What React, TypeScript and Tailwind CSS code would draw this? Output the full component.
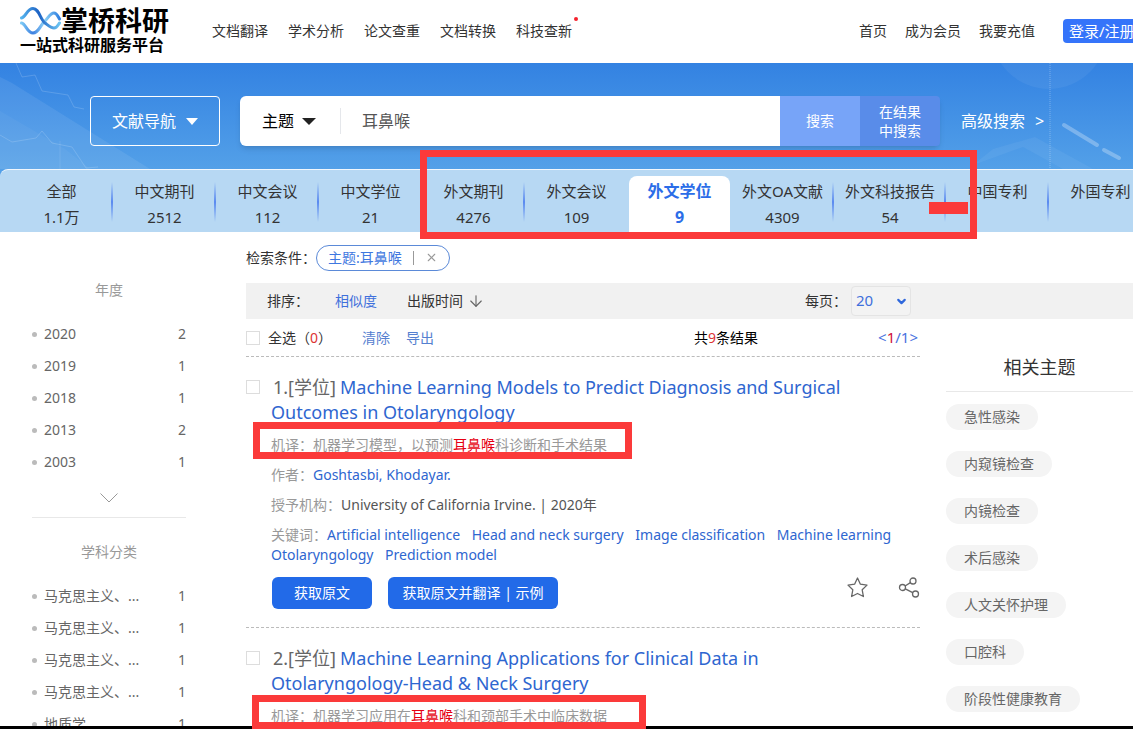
import { Fragment } from "react";
import { ArrowDown, ChevronDown, X } from "lucide-react";

const navLinks = ["文档翻译", "学术分析", "论文查重", "文档转换", "科技查新"];
const userLinks = ["首页", "成为会员", "我要充值"];

type SourceTab = { label: string; count: string; active?: boolean; divider?: boolean };

const tabs: SourceTab[] = [
  { label: "全部", count: "1.1万", divider: true },
  { label: "中文期刊", count: "2512", divider: true },
  { label: "中文会议", count: "112", divider: true },
  { label: "中文学位", count: "21", divider: true },
  { label: "外文期刊", count: "4276", divider: true },
  { label: "外文会议", count: "109" },
  { label: "外文学位", count: "9", active: true },
  { label: "外文OA文献", count: "4309", divider: true },
  { label: "外文科技报告", count: "54", divider: true },
  { label: "中国专利", count: "", divider: true },
  { label: "外国专利", count: "" },
];

const years = [
  { name: "2020", count: 2 },
  { name: "2019", count: 1 },
  { name: "2018", count: 1 },
  { name: "2013", count: 2 },
  { name: "2003", count: 1 },
];

const subjects = [
  { name: "马克思主义、...", count: 1 },
  { name: "马克思主义、...", count: 1 },
  { name: "马克思主义、...", count: 1 },
  { name: "马克思主义、...", count: 1 },
  { name: "地质学", count: 1 },
];

const topics = ["急性感染", "内窥镜检查", "内镜检查", "术后感染", "人文关怀护理", "口腔科", "阶段性健康教育"];

const keywords = [
  "Artificial intelligence",
  "Head and neck surgery",
  "Image classification",
  "Machine learning",
  "Otolaryngology",
  "Prediction model",
];

function Logo() {
  return (
    <a href="#" className="block w-[148px] shrink-0 pb-1 text-black">
      <span className="flex h-8 items-center">
        <svg viewBox="0 0 41 30" className="h-[30px] w-[41px] shrink-0" fill="none" strokeLinecap="round">
          <defs>
            <linearGradient id="waveTop" x1="0" y1="0" x2="1" y2="0">
              <stop offset="0%" stopColor="#56b4ee" />
              <stop offset="45%" stopColor="#1d62c4" />
              <stop offset="100%" stopColor="#6cc4f2" />
            </linearGradient>
            <linearGradient id="waveBottom" x1="0" y1="0" x2="1" y2="0">
              <stop offset="0%" stopColor="#7cc9f5" />
              <stop offset="30%" stopColor="#3d7fe0" />
              <stop offset="60%" stopColor="#8fd3f7" />
              <stop offset="100%" stopColor="#2f7fe0" />
            </linearGradient>
          </defs>
          <path d="M1.500 17C6 18 7 27 13 27C19 27 20 19 25 15C29 11 30 7 34 7C37 7 38 11 39.500 13" stroke="url(#waveBottom)" strokeWidth="3" />
          <path d="M1.500 12C6 11 7 2.500 13 2.500C19 2.500 20 13 25 17C29 20 31 22 34 22C37 22 38 19 39.500 17" stroke="url(#waveTop)" strokeWidth="3" />
        </svg>
        <span className="whitespace-nowrap text-[27px] font-bold leading-8">掌桥科研</span>
      </span>
      <span className="block whitespace-nowrap text-base font-bold leading-4">一站式科研服务平台</span>
    </a>
  );
}

function Header() {
  return (
    <header className="flex h-[63px] items-center bg-white pb-0.5 pl-5 text-sm text-[#333]">
      <Logo />
      <nav className="ml-11 flex gap-5">
        {navLinks.map((label) => (
          <a key={label} href="#" className="relative whitespace-nowrap">
            {label}
            {label === "科技查新" && <span className="absolute -right-1.5 -top-1 size-1 rounded-full bg-[#f5222d]" />}
          </a>
        ))}
      </nav>
      <div className="ml-auto flex items-center gap-[18px]">
        {userLinks.map((label) => (
          <a key={label} href="#" className="whitespace-nowrap">
            {label}
          </a>
        ))}
        <button className="ml-2.5 h-6 w-[70px] whitespace-nowrap rounded-l bg-[#3574fa] pl-1.5 text-left text-[15px] leading-6 text-white">登录/注册</button>
      </div>
    </header>
  );
}

function BannerArt() {
  return (
    <>
      <svg viewBox="0 0 180 106" className="absolute left-0 top-0 h-full w-[180px]" fill="none">
        <path d="M0 14L12 20L150 106H0Z" fill="#fff" fillOpacity="0.08" />
        <path d="M0 48L65 86L90 106H0Z" fill="#fff" fillOpacity="0.04" />
        <path d="M16 0L22 14L35 12L42 28L68 32L74 44L84 46M0 72L12 79L36 75L42 68L52 80L72 84L86 105L98 104" stroke="#fff" strokeOpacity="0.16" />
        <path d="M60 78V106" stroke="#fff" strokeOpacity="0.1" />
      </svg>
      <svg viewBox="0 0 160 106" className="absolute right-0 top-0 h-full w-40" fill="none">
        <circle cx="76" cy="-32" r="58" fill="#fff" fillOpacity="0.05" />
        <path d="M77 0V106" stroke="#fff" strokeOpacity="0.3" strokeDasharray="1 1" />
        <path d="M20 86L62 74L120 106H90L50 84L0 102Z" fill="#fff" fillOpacity="0.05" />
        <path d="M91 62L124 82M131 87L146 95" stroke="#fff" strokeOpacity="0.28" strokeWidth="4" strokeLinecap="round" />
      </svg>
    </>
  );
}

function SearchBanner() {
  return (
    <section className="relative flex h-[106px] bg-linear-to-b from-[#3382e2] to-[#53a0e8] pl-[90px] pt-[33px]">
      <BannerArt />
      <button className="relative flex h-[50px] w-[130px] shrink-0 items-center justify-center gap-2.5 rounded border border-white text-base text-white">
        文献导航
        <span className="border-x-[6px] border-t-[7px] border-x-transparent border-t-white" />
      </button>
      <form className="relative ml-5 flex h-[50px] max-w-[700px] flex-1 rounded-md shadow-md">
        <button type="button" className="flex w-[100px] shrink-0 items-center gap-2 rounded-l-md bg-white pl-[22px] text-base text-black">
          主题
          <span className="border-x-[7px] border-t-[7px] border-x-transparent border-t-[#222]" />
        </button>
        <div className="flex min-w-0 flex-1 items-center bg-white">
          <span className="h-[26px] w-px bg-gray-200" />
          <input aria-label="检索词" defaultValue="耳鼻喉" className="min-w-0 flex-1 px-[21px] text-base text-[#555] outline-none" />
        </div>
        <button type="button" className="w-20 shrink-0 bg-[#77a4f8] text-sm text-white">搜索</button>
        <button type="button" className="w-20 shrink-0 rounded-r bg-[#598ce9] text-sm leading-[19px] text-white">
          在结果
          <br />
          中搜索
        </button>
      </form>
      <a href="#" className="relative ml-[21px] flex h-[50px] items-center gap-2.5 whitespace-nowrap pr-20 text-base text-white">
        高级搜索
        <span>&gt;</span>
      </a>
    </section>
  );
}

function SourceTabs() {
  return (
    <div className="relative bg-[#53a0e8]">
      <nav className="flex h-[63px] overflow-hidden rounded-tl-lg border-t border-white/80 bg-[#b7d8f3] pl-2.5 text-[15px] text-[#333]">
        {tabs.map((tab) =>
          tab.active ? (
            <a key={tab.label} href="#" className="mx-px mt-1.5 flex w-[101px] shrink-0 flex-col rounded-t-lg bg-white text-center text-base font-bold leading-[26px] text-[#2b6de8]">
              <span className="mt-0.5">{tab.label}</span>
              <span>{tab.count}</span>
            </a>
          ) : (
            <a key={tab.label} href="#" className="relative min-w-[103px] shrink-0 whitespace-nowrap px-[11px] pt-2 text-center leading-[26px]">
              <span className="block">{tab.label}</span>
              <span className="block">{tab.count}</span>
              {tab.divider && <span className="absolute right-0 top-3 h-10 w-0.5 bg-linear-to-b from-transparent via-[#5a8af0] to-transparent" />}
            </a>
          )
        )}
      </nav>
      <div className="absolute -top-[19px] left-[420px] z-10 h-[89px] w-[557px] border-[7px] border-[#fb3a3a]" />
      <div className="absolute left-[929px] top-[33px] z-10 h-3 w-[39px] bg-[#fb3a3a]" />
    </div>
  );
}

function FacetList({ title, items }: { title: string; items: { name: string; count: number }[] }) {
  return (
    <>
      <h3 className="mb-3 h-8 text-center text-sm leading-8 text-[#999]">{title}</h3>
      <ul className="text-[#666]">
        {items.map((item, i) => (
          <li key={i} className="flex h-8 items-center">
            <span className="mr-[7px] size-[5px] rounded-full bg-[#bbb]" />
            <a href="#" className="flex-1 text-sm">{item.name}</a>
            <span className="text-sm">{item.count}</span>
          </li>
        ))}
      </ul>
    </>
  );
}

function Sidebar() {
  return (
    <aside className="w-[246px] shrink-0 pl-8 pr-[60px] pt-[42px]">
      <FacetList title="年度" items={years} />
      <div className="mb-[18px] flex h-10 items-center justify-center border-b border-[#e8e8e8]">
        <button aria-label="展开">
          <svg viewBox="0 0 18 10" className="h-2.5 w-[18px]" fill="none" stroke="#999">
            <path d="M0.500 0.500L9 9L17.500 0.500" />
          </svg>
        </button>
      </div>
      <FacetList title="学科分类" items={subjects} />
    </aside>
  );
}

function Checkbox({ id, label }: { id: string; label: string }) {
  return <input id={id} type="checkbox" aria-label={label} className="size-3.5 shrink-0 appearance-none border border-[#ddd] bg-white" />;
}

function ResultTitle({ index, children }: { index: number; children: string }) {
  return (
    <h2 className="pr-8 text-lg leading-[25px] text-[#666]">
      <span className="ml-0.5 mr-1">{`${index}.[学位]`}</span>
      <a href="#" className="text-[#2e66d0]">
        {children}
      </a>
    </h2>
  );
}

function Translation({ before, after }: { before: string; after: string }) {
  return (
    <p className="mt-[5px] text-sm leading-[30px] text-[#999]">
      {`机译：${before}`}
      <em className="not-italic text-[#e60012]">耳鼻喉</em>
      {after}
    </p>
  );
}

function ShareIcon() {
  return (
    <svg viewBox="0 0 22 22" className="size-[22px]" fill="none" stroke="#666" strokeWidth="1.300">
      <circle cx="4.500" cy="10.500" r="3" />
      <circle cx="15" cy="4" r="3" />
      <circle cx="17.500" cy="17" r="3" />
      <path d="M7.100 9L12.400 5.600M7.300 11.800L14.700 15.700" />
    </svg>
  );
}

function Results() {
  return (
    <div className="w-[674px] shrink-0">
      <div className="flex h-[38px] items-center border-b border-dashed border-[#bbb] text-sm text-[#333]">
        <Checkbox id="all" label="全选" />
        <label htmlFor="all" className="ml-2">
          全选（<span className="text-[#d33]">0</span>）
        </label>
        <a href="#" className="ml-[30px] text-[#5580d0]">清除</a>
        <a href="#" className="ml-4 text-[#5580d0]">导出</a>
        <span className="ml-auto text-black">
          共<span className="text-[#d33]">9</span>条结果
        </span>
        <span className="ml-[120px] mr-0.5 text-[15px] text-[#4a72e0]">
          &lt;<span className="text-[#d0103a]">1</span>/1&gt;
        </span>
      </div>

      <article className="flex border-b border-dashed border-[#bbb] py-[18px]">
        <div className="w-[25px] shrink-0 pt-[5px] leading-none">
          <Checkbox id="r1" label="选择第1条" />
        </div>
        <div className="relative min-w-0 flex-1">
          <ResultTitle index={1}>Machine Learning Models to Predict Diagnosis and Surgical Outcomes in Otolaryngology</ResultTitle>
          <Translation before="机器学习模型，以预测" after="科诊断和手术结果" />
          <p className="text-sm leading-[30px] text-[#999]">
            作者：<a href="#" className="text-[#2e66d0]">Goshtasbi, Khodayar.</a>
          </p>
          <p className="text-sm leading-[30px] text-[#999]">
            授予机构：<span className="text-[#555]">University of California Irvine. | 2020年</span>
          </p>
          <p className="py-[5px] text-sm leading-5 text-[#999]">
            关键词：
            {keywords.map((word) => (
              <Fragment key={word}>
                <a href="#" className="mr-2 inline-block text-[#2e66d0]">{word}</a>{" "}
              </Fragment>
            ))}
          </p>
          <div className="mt-[7px] flex h-8 items-start">
            <button className="ml-px h-8 w-[100px] rounded-md bg-[#226ae8] text-sm text-white">获取原文</button>
            <button className="ml-4 h-8 w-[170px] rounded-md bg-[#226ae8] text-sm text-white">获取原文并翻译 | 示例</button>
            <button aria-label="收藏" className="ml-auto mr-[30px]">
              <svg viewBox="0 0 22 22" className="size-[22px]" fill="none" stroke="#666" strokeWidth="1.300" strokeLinejoin="round">
                <path d="M11.500 1L14.400 7.200L21 8.100L16.200 12.800L17.400 19.500L11.500 16.500L5.600 19.500L6.800 12.800L2 8.100L8.600 7.200Z" />
              </svg>
            </button>
            <button aria-label="分享">
              <ShareIcon />
            </button>
          </div>
          <div className="absolute -left-[18px] top-[47px] z-10 h-[37px] w-[379px] border-[7px] border-[#fb3a3a]" />
        </div>
      </article>

      <article className="flex py-[18px]">
        <div className="w-[25px] shrink-0 pt-[5px] leading-none">
          <Checkbox id="r2" label="选择第2条" />
        </div>
        <div className="relative min-w-0 flex-1">
          <ResultTitle index={2}>Machine Learning Applications for Clinical Data in Otolaryngology-Head & Neck Surgery</ResultTitle>
          <Translation before="机器学习应用在" after="科和颈部手术中临床数据" />
          <div className="absolute -left-[19px] top-[49px] z-10 h-[34px] w-[394px] border-[7px] border-[#fb3a3a]" />
        </div>
      </article>
    </div>
  );
}

function RelatedTopics() {
  return (
    <aside className="ml-[26px] min-w-0 flex-1 pt-6">
      <h3 className="flex h-[49px] items-center justify-center border-b border-[#e8e8e8] text-lg text-[#333]">相关主题</h3>
      <ul className="mt-3 flex flex-col items-start gap-[21px]">
        {topics.map((topic) => (
          <li key={topic}>
            <a href="#" className="block h-[26px] whitespace-nowrap rounded-full bg-[#f4f4f4] px-[18px] text-sm leading-[26px] text-[#666]">{topic}</a>
          </li>
        ))}
      </ul>
    </aside>
  );
}

export default function App() {
  return (
    <div className="relative h-screen overflow-hidden bg-white font-['Noto_Sans','Noto_Sans_CJK_SC',sans-serif]">
      <Header />
      <SearchBanner />
      <SourceTabs />
      <div className="flex">
        <Sidebar />
        <main className="min-w-0 flex-1">
          <div className="flex h-[51px] items-center text-sm text-[#333]">
            检索条件：
            <span className="flex h-[26px] items-center rounded-full border border-[#5b8ad8] px-[11px] text-[#3f78e0]">
              主题:耳鼻喉
              <span className="mx-[11px] h-3.5 w-px bg-[#999]" />
              <button aria-label="移除条件">
                <X size={13} strokeWidth={2} color="#999" />
              </button>
            </span>
          </div>
          <div className="flex h-9 items-center bg-[#f1f1f1] pl-[21px] text-sm text-[#333]">
            排序：
            <a href="#" className="ml-[26px] text-[#3f70dc]">相似度</a>
            <a href="#" className="ml-[30px] flex items-center gap-1">
              出版时间
              <ArrowDown size={18} strokeWidth={1.5} color="#666" />
            </a>
            <label htmlFor="pageSize" className="ml-auto">每页：</label>
            <div className="relative ml-1 mr-[222px]">
              <select id="pageSize" className="h-[30px] w-[60px] appearance-none rounded border border-[#e4e4e4] bg-[#f3f3f3] pl-1 text-[15px] text-[#3f70dc]">
                <option>20</option>
              </select>
              <ChevronDown size={13} strokeWidth={4} color="#2f68dc" className="pointer-events-none absolute right-[3px] top-[9px]" />
            </div>
          </div>
          <div className="flex">
            <Results />
            <RelatedTopics />
          </div>
        </main>
      </div>
      <div className="absolute bottom-0 left-0 h-[3px] w-full bg-black" />
    </div>
  );
}
